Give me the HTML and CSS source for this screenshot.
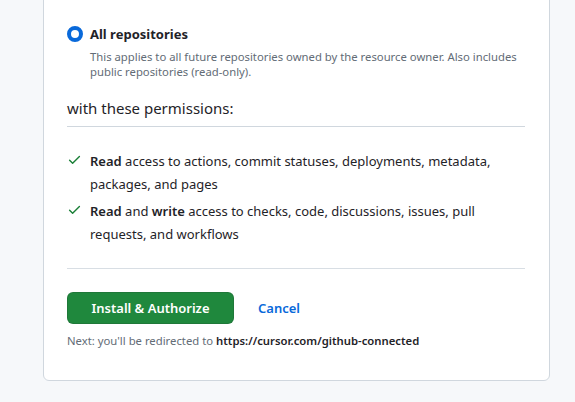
FILE: index.html
```html
<!DOCTYPE html>
<html>
<head>
<meta charset="utf-8">
<link rel="stylesheet" href="styles.css">
</head>
<body>
<div class="card">
  <div class="option">
    <span class="radio"></span>
    <div class="option-body">
      <div class="option-label">All repositories</div>
      <div class="option-desc">This applies to all future repositories owned by the resource owner. Also includes public repositories (read-only).</div>
    </div>
  </div>
  <div class="perm-title">with these permissions:</div>
  <ul class="perms">
    <li class="perm">
      <svg class="check" viewBox="0 0 16 16" width="16" height="16"><path d="M13.78 4.22a.75.75 0 0 1 0 1.06l-7.25 7.25a.75.75 0 0 1-1.06 0L2.22 9.28a.751.751 0 0 1 .018-1.042.751.751 0 0 1 1.042-.018L6 10.94l6.72-6.72a.75.75 0 0 1 1.06 0Z"/></svg>
      <span><b>Read</b> access to actions, commit statuses, deployments, metadata, packages, and pages</span>
    </li>
    <li class="perm">
      <svg class="check" viewBox="0 0 16 16" width="16" height="16"><path d="M13.78 4.22a.75.75 0 0 1 0 1.06l-7.25 7.25a.75.75 0 0 1-1.06 0L2.22 9.28a.751.751 0 0 1 .018-1.042.751.751 0 0 1 1.042-.018L6 10.94l6.72-6.72a.75.75 0 0 1 1.06 0Z"/></svg>
      <span><b>Read</b> and <b>write</b> access to checks, code, discussions, issues, pull requests, and workflows</span>
    </li>
  </ul>
  <div class="actions">
    <button class="btn-primary">Install &amp; Authorize</button>
    <a class="cancel" href="#">Cancel</a>
  </div>
  <p class="next">Next: you'll be redirected to <b>https://cursor.com/github-connected</b></p>
</div>
</body>
</html>
```
FILE: styles.css
```css
html, body {
  margin: 0;
  padding: 0;
  background: #f6f8fa;
}
body {
  font-family: "Noto Sans", "Liberation Sans", sans-serif;
  color: #1f2328;
}
.card {
  box-sizing: border-box;
  width: 507px;
  margin-left: 43px;
  margin-top: -8px;
  background: #fff;
  border: 1px solid #d0d7de;
  border-radius: 6px;
  padding: 31px 24px 31px 23px;
}
.option {
  display: flex;
  align-items: flex-start;
  gap: 7px;
}
.radio {
  flex: none;
  box-sizing: border-box;
  width: 16px;
  height: 16px;
  border: 4px solid #0969da;
  border-radius: 50%;
  margin-top: 2px;
}
.option-label {
  font-size: 13px;
  font-weight: 700;
  line-height: 20px;
}
.option-desc {
  font-size: 11.3px;
  color: #636c76;
  line-height: 15px;
  margin-top: 5px;
}
.perm-title {
  font-size: 15px;
  line-height: 22px;
  margin-top: 18px;
  padding-bottom: 7px;
  border-bottom: 1px solid #d0d7de;
}
.perms {
  list-style: none;
  margin: 0;
  padding: 23px 0 18px 0;
  border-bottom: 1px solid #d8dee4;
}
.perm {
  display: flex;
  align-items: flex-start;
  gap: 8px;
  font-size: 13px;
  line-height: 23px;
  margin-bottom: 4px;
}
.perm b { font-weight: 600; }
.check {
  flex: none;
  width: 15px;
  height: 15px;
  fill: #1a7f37;
  margin-top: 2px;
}
.actions {
  display: flex;
  align-items: center;
  gap: 24px;
  margin-top: 23px;
}
.btn-primary {
  width: 167px;
  height: 32px;
  border: 1px solid rgba(31,35,40,0.15);
  border-radius: 6px;
  background: #1f883d;
  color: #fff;
  font-family: inherit;
  font-size: 13px;
  font-weight: 600;
  padding: 0;
}
.cancel {
  color: #0969da;
  text-decoration: none;
  font-size: 13px;
  font-weight: 600;
}
.next {
  margin: 9px 0 0 0;
  font-size: 11.3px;
  line-height: 16px;
  color: #636c76;
}
.next b {
  color: #1f2328;
  font-weight: 600;
}
```
